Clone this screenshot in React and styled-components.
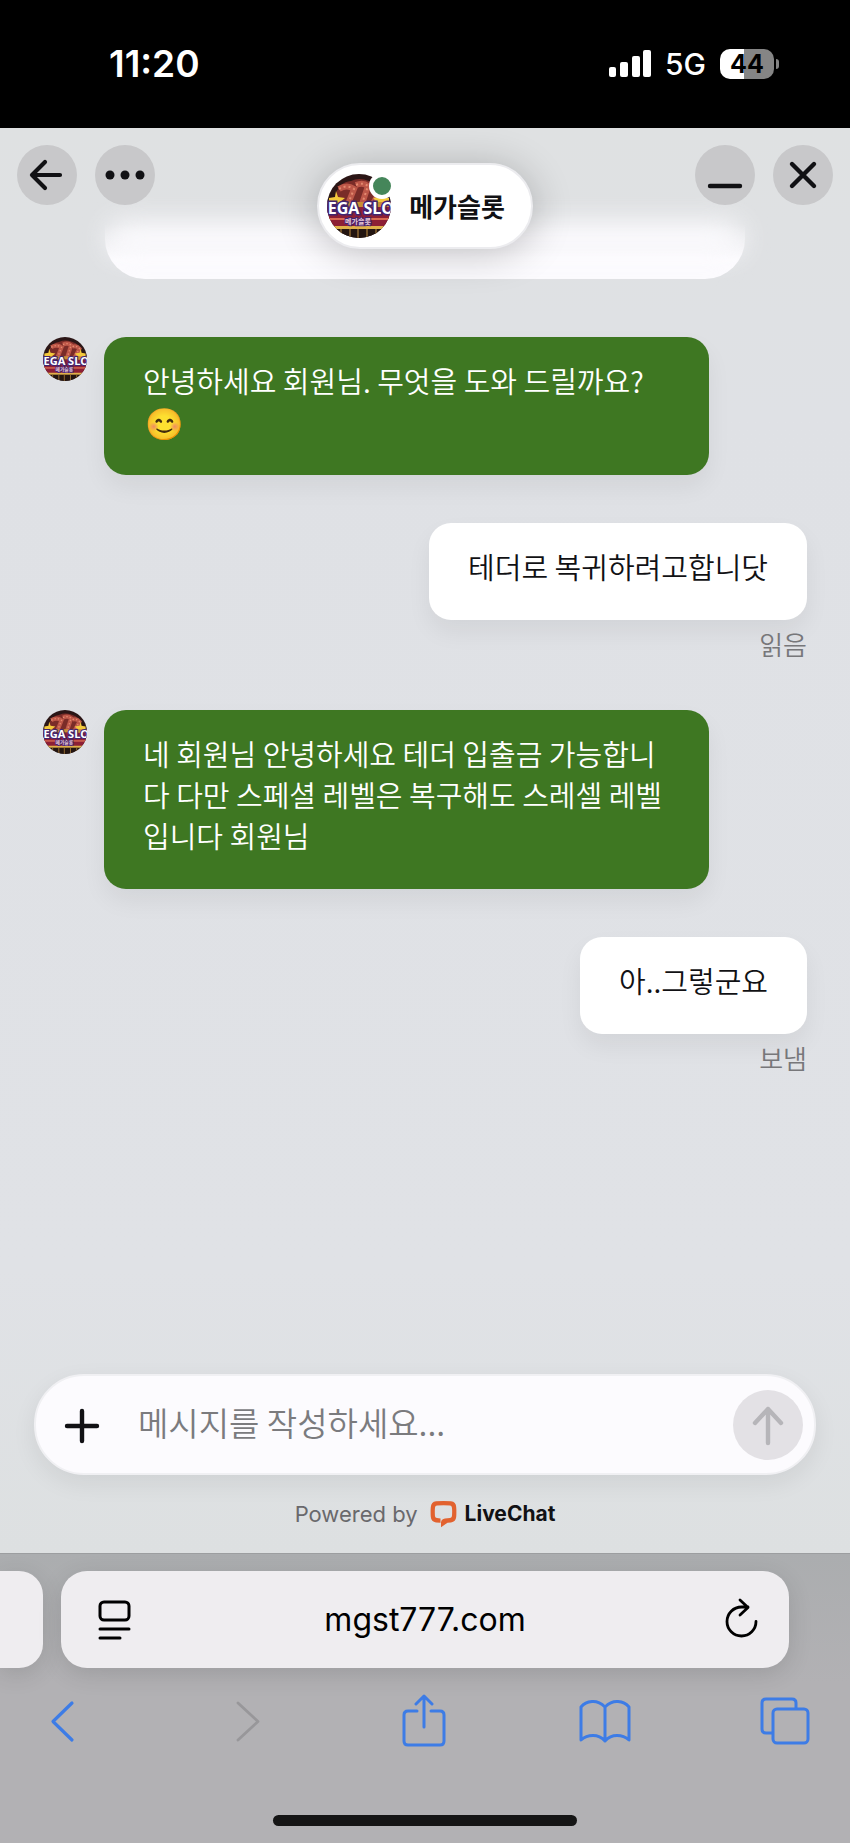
import React, { useState } from 'react';
import styled, { createGlobalStyle, css } from 'styled-components';


// global
const GlobalStyle = createGlobalStyle`
  * {
    box-sizing: border-box;
  }

  body {
    margin: 0;
    background-color: #b2b1b4;
    font-family: 'Noto Sans CJK KR', sans-serif;
    color: #111114;
  }

  button, input {
    margin: 0;
    padding: 0;
    border: none;
    background: none;
    font-family: inherit;
    color: inherit;
  }

  button {
    cursor: pointer;
  }

  svg {
    display: block;
  }
`;

const Screen = styled.div`
  display: flex;
  flex-direction: column;
  min-height: 100vh;
`;

// status bar
const StatusBar = styled.header`
  display: flex;
  justify-content: space-between;
  align-items: center;
  height: 128px;
  padding: 0 71px 0 109px;
  background-color: #000;
  color: #fff;
  font-family: Inter, sans-serif;
`;

const Clock = styled.time`
  font-size: 37px;
  line-height: 40px;
  font-weight: 600;
`;

const StatusIcons = styled.div`
  display: flex;
  align-items: center;
  gap: 14px;
`;

const Network = styled.span`
  font-size: 30px;
  line-height: 40px;
  font-weight: 500;
`;

const Battery = styled.div`
  display: flex;
  align-items: center;
  gap: 2px;

  &::after {
    content: '';
    width: 3px;
    height: 10px;
    border-radius: 0 4px 4px 0;
    background-color: #858585;
  }
`;

const BatteryLevel = styled.span`
  width: 54px;
  border-radius: 10px;
  background: linear-gradient(to right, #fff 44%, #858585 44%);
  color: #000;
  font-size: 25px;
  line-height: 30px;
  font-weight: 700;
  text-align: center;
`;

// chat
const Chat = styled.main`
  position: relative;
  flex: 1;
  display: flex;
  flex-direction: column;
  background: linear-gradient(to bottom, #dfe1e2, #dfe1e5 20%, #e0e2e6 80%, #dde0e1);
`;

const ChatHeader = styled.div`
  position: absolute;
  top: 0;
  left: 0;
  right: 0;
  z-index: 10;
  display: grid;
  grid-template-columns: 1fr auto 1fr;
  align-items: start;
  padding: 17px 17px 0;
`;

const HeaderGroup = styled.div`
  display: flex;
  justify-content: ${({ $end }) => ($end ? 'flex-end' : 'flex-start')};
  gap: 18px;
`;

const RoundButton = styled.button`
  width: 60px;
  height: 60px;
  border-radius: 50%;
  background-color: #c8c8ca;
`;

const AgentPill = styled.div`
  display: flex;
  align-items: center;
  gap: 18px;
  height: 86px;
  margin-top: 18px;
  padding: 0 26px 0 8px;
  border: 2px solid #ececef;
  border-radius: 43px;
  background-color: #fff;
  box-shadow: 0 4px 40px rgba(0, 0, 0, 0.24);
`;

const AgentName = styled.h1`
  margin: 0;
  font-size: 26px;
  line-height: 40px;
  font-weight: 700;
`;

const AvatarBox = styled.div`
  position: relative;
  flex: none;
  width: ${({ $size }) => $size}px;
  height: ${({ $size }) => $size}px;

  > svg {
    width: 100%;
    height: 100%;
    border-radius: 50%;
  }
`;

const OnlineDot = styled.span`
  position: absolute;
  top: -1px;
  right: -4px;
  width: 26px;
  height: 26px;
  border: 4px solid #fff;
  border-radius: 50%;
  background-color: #45865a;
`;

const MessageList = styled.div`
  flex: 1;
  display: flex;
  flex-direction: column;
  padding: 60px 43px 48px;
`;

// bottom edge of the card that has scrolled under the header
const ScrolledCard = styled.div`
  position: relative;
  height: 91px;
  margin: 0 62px 58px;
  border-radius: 0 0 40px 40px;
  background: linear-gradient(to bottom, rgba(252, 251, 254, 0) 40%, #fcfbfe 78%);

  &::before {
    content: '';
    position: absolute;
    inset: 34px 2px 24px;
    border-radius: 20px;
    background-color: #fcfbfe;
    filter: blur(14px);
  }
`;

const MessageRow = styled.div`
  display: flex;
  align-items: flex-start;
  gap: 17px;
  margin-bottom: 48px;

  ${({ $own }) => $own && css`
    flex-direction: column;
    align-items: flex-end;
    gap: 6px;
  `}
`;

const Bubble = styled.p`
  max-width: 605px;
  margin: 0;
  padding: 23px 39px 33px;
  border-radius: 22px;
  background-color: ${({ $own }) => ($own ? '#fff' : '#3e7722')};
  color: ${({ $own }) => ($own ? '#111114' : '#fff')};
  box-shadow: 0 12px 24px rgba(0, 0, 0, 0.06);
  font-size: 29px;
  line-height: 41px;
  font-weight: 350;
  word-break: break-all;
`;

const Emoji = styled.span`
  display: inline-block;
  height: 41px;
  padding-left: 2px;
  font-size: 31px;
  vertical-align: top;
`;

const Receipt = styled.span`
  color: #77777a;
  font-size: 26px;
  line-height: 36px;
  font-weight: 350;
`;

// composer
const Composer = styled.form`
  display: flex;
  align-items: center;
  height: 101px;
  margin: 0 34px;
  padding: 0 11px 0 24px;
  border: 2px solid #f0f0f3;
  border-radius: 50px;
  background-color: #fcfbfe;
  box-shadow: 0 8px 24px rgba(0, 0, 0, 0.07);
`;

const AttachButton = styled.button`
  width: 44px;
  height: 44px;
`;

const MessageInput = styled.input`
  flex: 1;
  min-width: 0;
  margin: 0 16px 0 34px;
  padding-bottom: 5px;
  font-size: 33px;
  line-height: 44px;
  font-weight: 350;
  outline: none;

  &::placeholder {
    color: #7b7b7e;
    opacity: 1;
  }
`;

const SendButton = styled.button`
  width: 70px;
  height: 70px;
  border-radius: 50%;
  background-color: #e3e1e5;
`;

const PoweredBy = styled.div`
  display: flex;
  justify-content: center;
  align-items: center;
  gap: 12px;
  height: 78px;
  color: #69696c;
  font-family: Inter, sans-serif;
  font-size: 22px;
  line-height: 30px;
`;

const LiveChatLink = styled.a`
  display: flex;
  align-items: center;
  gap: 8px;
  color: #111114;
  font-size: 21px;
  font-weight: 700;
  text-decoration: none;
`;

// browser
const Browser = styled.footer`
  display: flex;
  flex-direction: column;
  overflow: hidden;
  border-top: 1px solid #9c9ea0;
  background: linear-gradient(to bottom, #abadaf, #b2b1b4 45%);
`;

const TabStrip = styled.div`
  display: grid;
  grid-template-columns: 43px 1fr 43px;
  gap: 18px;
  padding: 17px 0 0;
`;

const tabSurface = css`
  height: 97px;
  background-color: #efedf0;
  box-shadow: 0 6px 24px rgba(0, 0, 0, 0.12);
`;

const NextTab = styled.div`
  ${tabSurface}
  border-radius: 0 24px 24px 0;
`;

const AddressBar = styled.div`
  ${tabSurface}
  display: flex;
  align-items: center;
  padding: 0 25px;
  border-radius: 26px;
`;

const AddressButton = styled.button`
  width: 56px;
  height: 56px;
`;

const AddressInput = styled.input`
  flex: 1;
  min-width: 0;
  color: #000;
  font-family: Inter, sans-serif;
  font-size: 32px;
  line-height: 40px;
  text-align: center;
  outline: none;
`;

const Toolbar = styled.nav`
  display: flex;
  justify-content: space-between;
  padding: 26px 37px 0 34px;
`;

const ToolButton = styled.button`
  width: 56px;
  height: 56px;
  color: #3d7ce6;

  &:disabled {
    color: #98979a;
  }
`;

const HomeIndicator = styled.div`
  width: 304px;
  height: 11px;
  margin: 65px auto 17px;
  border-radius: 6px;
  background-color: #151515;
`;

const Avatar = ({ size, online }) => (
  <AvatarBox $size={size}>
    <svg viewBox="0 0 64 64" aria-hidden="true">
      <rect width="64" height="64" fill="#2b1616" />
      <path d="M8 22 Q12 8 24 7 Q32 3 42 7 Q54 10 56 24 L50 30 H12 Z" fill="#7a2c28" />
      <path d="M12 15 q8 -5 15 0 l-6 15 M29 11 q7 -3 12 1 l-6 18 M43 14 q6 -2 10 3 l-7 13" fill="none" stroke="#bd5748" strokeWidth="6" />
      <path d="M12 15 q8 -5 15 0 l-6 15 M29 11 q7 -3 12 1 l-6 18 M43 14 q6 -2 10 3 l-7 13" fill="none" stroke="#e48a70" strokeWidth="2" strokeDasharray="2 3" />
      <path d="M9 17 l2 6 7 1 -5 4 2 6 H2 V24 l6 -1z M55 17 l-2 6 -7 1 5 4 -2 6 h13 V24 l-6 -1z" fill="#f3c93c" />
      <rect y="28" width="64" height="5" fill="#c98f34" />
      <rect y="33" width="64" height="20" fill="#8d1f35" />
      <rect y="44" width="64" height="2" fill="#d86a52" />
      <rect y="52" width="64" height="3" fill="#e0b04a" />
      <rect y="55" width="64" height="9" fill="#231510" />
      <path d="M14 55 v9 M23 55 v9 M31 55 v9 M40 55 v9 M49 55 v9" stroke="#8d6631" strokeWidth="1.5" />
      <text x="31" y="40" textAnchor="middle" fontFamily="Open Sans, sans-serif" fontSize="16" fontWeight="700" fill="#fff" stroke="#43246f" strokeWidth="3" paintOrder="stroke">MEGA SLOT</text>
      <text x="31" y="50" textAnchor="middle" fontFamily="Noto Sans CJK KR, sans-serif" fontSize="7" fontWeight="700" fill="#e9c9d6" stroke="#43246f" strokeWidth="2" paintOrder="stroke">메가슬롯</text>
    </svg>
    {online && <OnlineDot />}
  </AvatarBox>
);

const messages = [
  { id: 1, text: '안녕하세요 회원님. 무엇을 도와 드릴까요? ', emoji: '😊' },
  { id: 2, own: true, text: '테더로 복귀하려고합니닷', receipt: '읽음' },
  { id: 3, text: '네 회원님 안녕하세요 테더 입출금 가능합니다 다만 스페셜 레벨은 복구해도 스레셀 레벨입니다 회원님' },
  { id: 4, own: true, text: '아..그렇군요', receipt: '보냄' },
];

const App = () => {
  const [draft, setDraft] = useState('');

  return (
    <>
      <GlobalStyle />
      <Screen>
        <StatusBar>
          <Clock>11:20</Clock>
          <StatusIcons>
            <svg width="42" height="28" viewBox="0 0 42 28" fill="#fff" aria-hidden="true">
              <rect x="0" y="17" width="7" height="10" rx="2" />
              <rect x="11" y="12" width="8" height="15" rx="2" />
              <rect x="23" y="6" width="8" height="21" rx="2" />
              <rect x="34" y="0" width="8" height="27" rx="2" />
            </svg>
            <Network>5G</Network>
            <Battery>
              <BatteryLevel>44</BatteryLevel>
            </Battery>
          </StatusIcons>
        </StatusBar>

        <Chat>
          <ChatHeader>
            <HeaderGroup>
              <RoundButton type="button" aria-label="뒤로">
                <svg width="60" height="60" viewBox="0 0 60 60" fill="none" stroke="#111114" strokeWidth="4.2" strokeLinecap="round" strokeLinejoin="round">
                  <path d="M43 30 H15 M28 17 L15 30 L28 43" />
                </svg>
              </RoundButton>
              <RoundButton type="button" aria-label="메뉴">
                <svg width="60" height="60" viewBox="0 0 60 60" fill="#111114">
                  <circle cx="15" cy="30" r="4.5" />
                  <circle cx="30" cy="30" r="4.5" />
                  <circle cx="45" cy="30" r="4.5" />
                </svg>
              </RoundButton>
            </HeaderGroup>
            <AgentPill>
              <Avatar size={64} online />
              <AgentName>메가슬롯</AgentName>
            </AgentPill>
            <HeaderGroup $end>
              <RoundButton type="button" aria-label="최소화">
                <svg width="60" height="60" viewBox="0 0 60 60" stroke="#111114" strokeWidth="4.4" strokeLinecap="round">
                  <path d="M15 41 H45" />
                </svg>
              </RoundButton>
              <RoundButton type="button" aria-label="닫기">
                <svg width="60" height="60" viewBox="0 0 60 60" stroke="#111114" strokeWidth="4.4" strokeLinecap="round">
                  <path d="M19 19 L41 41 M41 19 L19 41" />
                </svg>
              </RoundButton>
            </HeaderGroup>
          </ChatHeader>

          <MessageList>
            <ScrolledCard />
            {messages.map((message) => (
              <MessageRow key={message.id} $own={message.own}>
                {!message.own && <Avatar size={44} />}
                <Bubble $own={message.own}>
                  {message.text}
                  {message.emoji && <Emoji>{message.emoji}</Emoji>}
                </Bubble>
                {message.receipt && <Receipt>{message.receipt}</Receipt>}
              </MessageRow>
            ))}
          </MessageList>

          <Composer onSubmit={(event) => event.preventDefault()}>
            <AttachButton type="button" aria-label="첨부">
              <svg width="44" height="44" viewBox="0 0 44 44" stroke="#111114" strokeWidth="4.4" strokeLinecap="round">
                <path d="M7 23 H37 M22 8 V38" />
              </svg>
            </AttachButton>
            <MessageInput
              aria-label="메시지"
              placeholder="메시지를 작성하세요..."
              value={draft}
              onChange={(event) => setDraft(event.target.value)}
            />
            <SendButton type="submit" aria-label="보내기">
              <svg width="70" height="70" viewBox="0 0 70 70" fill="none" stroke="#b6b5b9" strokeWidth="4.4" strokeLinecap="round" strokeLinejoin="round">
                <path d="M35 53 V19 M22 33 L35 19 L48 33" />
              </svg>
            </SendButton>
          </Composer>

          <PoweredBy>
            <span>Powered by</span>
            <LiveChatLink href="#livechat">
              <svg width="27" height="28" viewBox="0 0 27 28" aria-hidden="true">
                <path fill="#e2622f" fillRule="evenodd" d="M6 1.3 Q13.5 0.5 21 1.3 Q26 1.8 26.2 7 Q26.6 12 26.2 17 Q25.8 21.6 21 22.4 L17.5 22.8 L11 27.2 V22.5 Q11.4 19 15 18.6 L20 18 Q21.5 17.8 21.9 16.2 Q22.4 11.5 21.9 7.4 Q21.6 5.8 20 5.6 Q13.5 5 7 5.6 Q5.2 5.8 5 7.4 Q4.6 11.5 5 16.2 Q5.2 17.9 7 18.1 L10.5 18.6 V22.8 L6 22.4 Q1.2 21.8 0.8 17 Q0.4 12 0.8 7 Q1.2 1.8 6 1.3 Z" />
              </svg>
              LiveChat
            </LiveChatLink>
          </PoweredBy>
        </Chat>

        <Browser>
          <TabStrip>
            <NextTab />
            <AddressBar>
              <AddressButton type="button" aria-label="페이지 설정">
                <svg width="56" height="56" viewBox="0 0 56 56" fill="none" stroke="#000" strokeWidth="3" strokeLinecap="round">
                  <rect x="14" y="10" width="29" height="18" rx="4" />
                  <path d="M14 37 H43 M14 46 H34" />
                </svg>
              </AddressButton>
              <AddressInput aria-label="주소" defaultValue="mgst777.com" />
              <AddressButton type="button" aria-label="새로고침">
                <svg width="56" height="56" viewBox="0 0 56 56" fill="none" stroke="#000" strokeWidth="2.8" strokeLinecap="round" strokeLinejoin="round">
                  <path d="M48 29.5 A14.5 14.5 0 1 1 33.500 15 H40 M32 8 L40 15.5 L32 23" />
                </svg>
              </AddressButton>
            </AddressBar>
          </TabStrip>
          <Toolbar>
            <ToolButton type="button" aria-label="이전 페이지">
              <svg width="56" height="56" viewBox="0 0 56 56" fill="none" stroke="currentColor" strokeWidth="3.2" strokeLinecap="round" strokeLinejoin="round">
                <path d="M38 9 L19 27.500 L38 46" />
              </svg>
            </ToolButton>
            <ToolButton type="button" aria-label="다음 페이지" disabled>
              <svg width="56" height="56" viewBox="0 0 56 56" fill="none" stroke="currentColor" strokeWidth="2.8" strokeLinecap="round" strokeLinejoin="round">
                <path d="M23 9 L43 27.500 L23 46" />
              </svg>
            </ToolButton>
            <ToolButton type="button" aria-label="공유">
              <svg width="56" height="56" viewBox="0 0 56 56" fill="none" stroke="currentColor" strokeWidth="3" strokeLinecap="round" strokeLinejoin="round">
                <path d="M21 17 H12 Q8 17 8 21 V47 Q8 51 12 51 H44 Q48 51 48 47 V21 Q48 17 44 17 H35 M28 33 V2 M20 10 L28 2 L36 10" />
              </svg>
            </ToolButton>
            <ToolButton type="button" aria-label="책갈피">
              <svg width="56" height="56" viewBox="0 0 56 56" fill="none" stroke="currentColor" strokeWidth="3" strokeLinecap="round" strokeLinejoin="round">
                <path d="M29 13 Q23 7 16 7.5 Q9 8 5 13 V46 Q10 41.5 17 41.5 Q24 41.5 29 47 Q34 41.5 41 41.5 Q48 41.5 53 46 V13 Q49 8 42 7.5 Q35 7 29 13 Z V47" />
              </svg>
            </ToolButton>
            <ToolButton type="button" aria-label="탭">
              <svg width="56" height="56" viewBox="0 0 56 56" fill="none" stroke="currentColor" strokeWidth="3" strokeLinejoin="round">
                <rect x="16" y="15" width="35" height="34" rx="4" />
                <path d="M16 39 H9 Q5 39 5 35 V9 Q5 5 9 5 H35 Q39 5 39 9 V15" />
              </svg>
            </ToolButton>
          </Toolbar>
          <HomeIndicator />
        </Browser>
      </Screen>
    </>
  );
};

export default App;
